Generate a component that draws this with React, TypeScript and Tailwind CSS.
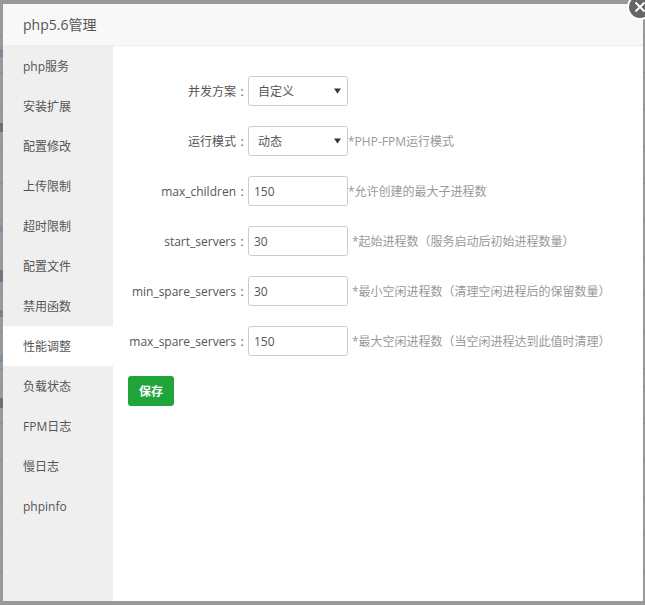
const fontFamily = "font-['Open_Sans','Noto_Sans_CJK_SC',sans-serif]";

const menu = ['php服务', '安装扩展', '配置修改', '上传限制', '超时限制', '配置文件', '禁用函数', '性能调整', '负载状态', 'FPM日志', '慢日志', 'phpinfo'];

const fields = [
  { label: 'max_children', value: '150', hint: '*允许创建的最大子进程数', gap: 'ml-0' },
  { label: 'start_servers', value: '30', hint: '*起始进程数（服务启动后初始进程数量）', gap: 'ml-1' },
  { label: 'min_spare_servers', value: '30', hint: '*最小空闲进程数（清理空闲进程后的保留数量）', gap: 'ml-1' },
  { label: 'max_spare_servers', value: '150', hint: '*最大空闲进程数（当空闲进程达到此值时清理）', gap: 'ml-1' },
];

// bits of the page text that stick out from behind the dialog
const pageBits = [
  { y: 49, h: 8, color: '#7f8796' },
  { y: 123, h: 9, color: '#6d6e80' },
  { y: 225, h: 7, color: '#838f9f' },
  { y: 270, h: 12, color: '#737382' },
  { y: 310, h: 7, color: '#76838f' },
  { y: 355, h: 7, color: '#8090a3' },
  { y: 398, h: 10, color: '#6f6c7e' },
];

const Label = ({ text }: { text: string }) => (
  <span className="flex w-[120px] shrink-0 justify-end pt-[2px] text-[12px] text-[#555]">
    {text}
    <span className="w-[12px] text-center">:</span>
  </span>
);

const FakeSelect = ({ value }: { value: string }) => (
  <div className="flex h-[30px] w-[100px] shrink-0 items-center justify-between rounded-[3px] border border-[#ccc] bg-white pl-[9px] pr-[6px] text-[12px] text-[#555]">
    <span className="pt-[2px]">{value}</span>
    <svg width="7" height="6" viewBox="0 0 7 6">
      <path d="M0 0.5h7L3.5 5.5z" fill="#333" />
    </svg>
  </div>
);

export default function App() {
  return (
    <div className={`${fontFamily} relative h-[605px] w-[645px] overflow-hidden bg-[repeating-linear-gradient(180deg,#999_0px,#999_35px,#8d8d8d_35px,#8d8d8d_36px,#999_36px,#999_37px),repeating-linear-gradient(180deg,#999_0px,#999_16px,#8d8d8d_16px,#8d8d8d_17px,#999_17px,#999_37px)] bg-[length:100%_375px,100%_100%] bg-no-repeat pl-[3px] pt-[4px]`}>
      <svg width="3" height="605" className="absolute left-0 top-0">
        {pageBits.map(b => (
          <rect key={b.y} x="0" y={b.y} width="3" height={b.h} fill={b.color} />
        ))}
      </svg>

      <div className="relative flex h-[597px] w-[640px] flex-col bg-white">
        <div className="flex h-[42px] shrink-0 items-center border-b border-[#eee] bg-[#f8f8f8] pl-[20px] text-[14px] text-[#555]">
          php5.6管理
        </div>

        <div className="flex flex-1">
          <div className="w-[110px] shrink-0 bg-[#efefef]">
            {menu.map(item => (
              <div
                key={item}
                className={`flex h-10 items-center pl-[20px] pt-[2px] text-[12px] text-[#555] ${item === '性能调整' ? 'bg-white' : ''}`}
              >
                {item}
              </div>
            ))}
          </div>

          <div className="flex-1 pl-[15px] pt-[30px]">
            <div className="flex flex-col gap-5">
              <div className="flex items-center">
                <Label text="并发方案" />
                <FakeSelect value="自定义" />
              </div>
              <div className="flex items-center">
                <Label text="运行模式" />
                <FakeSelect value="动态" />
                <span className="pt-[2px] text-[12px] text-[#999]">*PHP-FPM运行模式</span>
              </div>
              {fields.map(f => (
                <div key={f.label} className="flex items-center">
                  <Label text={f.label} />
                  <input
                    readOnly
                    value={f.value}
                    className="h-[30px] w-[100px] shrink-0 rounded-[3px] border border-[#ccc] bg-white pl-[5px] text-[12px] text-[#555] outline-none"
                  />
                  <span className={`${f.gap} whitespace-nowrap pt-[2px] text-[12px] text-[#999]`}>{f.hint}</span>
                </div>
              ))}
              <button className="h-[30px] w-[46px] rounded-[3px] bg-[#20a53a] pt-[2px] text-[12px] font-bold text-white">保存</button>
            </div>
          </div>
        </div>

        <button className="absolute right-[-10px] top-[-10px] flex h-[26px] w-[26px] items-center justify-center rounded-full border-2 border-white bg-[#666]">
          <svg width="12" height="12" viewBox="0 0 12 12">
            <path d="M1.5 1.5l9 9M10.5 1.5l-9 9" stroke="#fff" strokeWidth="2" />
          </svg>
        </button>
      </div>
    </div>
  );
}
